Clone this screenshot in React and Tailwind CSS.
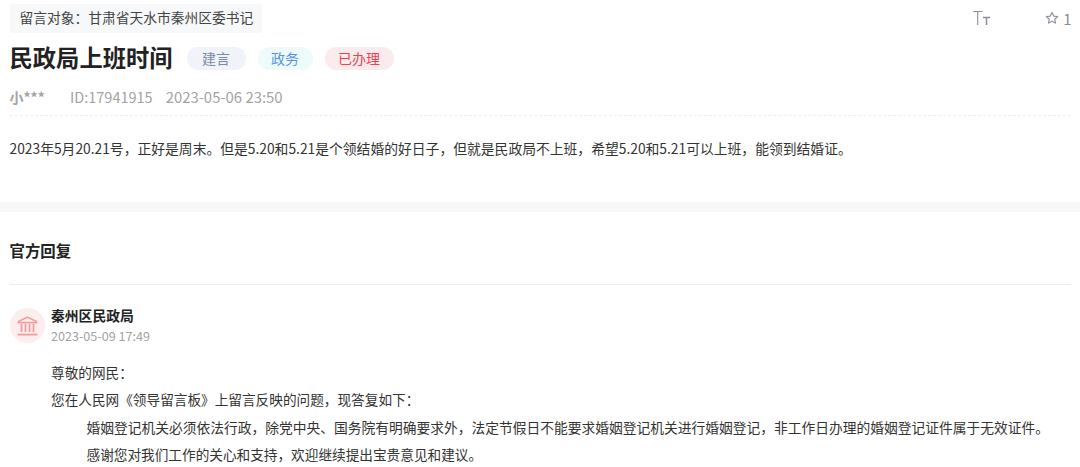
const font = { fontFamily: '"Noto Sans CJK SC", "Liberation Sans", sans-serif' };

function FontSizeIcon() {
  return (
    <svg width="18" height="16" viewBox="0 0 18 16" fill="none" stroke="#8a8f99">
      <path strokeWidth="1.1" d="M0 1.5h9.5M4.7 1.5V15" />
      <path strokeWidth="1.5" d="M10 7.5h7M13.5 7.5V15" />
    </svg>
  );
}

function StarIcon() {
  return (
    <svg width="14" height="14" viewBox="0 0 24 24" fill="none" stroke="#8a8f99" strokeWidth="1.9" strokeLinejoin="round">
      <path d="M12 2.5l2.9 6.2 6.8.8-5 4.6 1.3 6.7-6-3.4-6 3.4 1.3-6.7-5-4.6 6.8-.8z" />
    </svg>
  );
}

function BankIcon() {
  return (
    <svg width="21" height="20" viewBox="0 0 21 20" fill="none" stroke="#f39c9c" strokeWidth="1.6">
      <path d="M10.5 1.2L19.5 5.4V6.6H1.5V5.4z" />
      <path d="M4.5 8v8M8.5 8v8M12.5 8v8M16.5 8v8" strokeWidth="1.8" />
      <path d="M0.5 18.6h20" strokeWidth="1.8" />
    </svg>
  );
}

function Tag({ className, children }) {
  return (
    <span className={`flex h-[23px] items-center justify-center rounded-full text-[14px] ${className}`}>
      {children}
    </span>
  );
}

export default function App() {
  return (
    <div style={font} className="h-[467px] w-[1080px] overflow-hidden bg-white text-[#333]">
      <section className="h-[202px] px-[9.5px] pt-[4px]">
        <div className="flex items-start justify-between">
          <div className="flex h-[29px] items-center bg-[#f7f8fa] pr-[9px] pl-[10px] pb-[2px] text-[13.75px] leading-none text-[#444]">
            留言对象：甘肃省天水市秦州区委书记
          </div>
          <div className="-mr-px flex items-center pt-[6px] text-[15px] leading-none text-[#8a8f99]">
            <FontSizeIcon />
            <span className="ml-[54px] flex items-center gap-[4px]">
              <StarIcon />1
            </span>
          </div>
        </div>

        <div className="mt-[9px] flex h-[33px] items-center">
          <h1 className="pb-[2px] text-[23.3px] leading-none font-bold text-[#222]">民政局上班时间</h1>
          <div className="ml-[14px] flex gap-[12px]">
            <Tag className="w-[59px] bg-[#f0f3f9] text-[#7c8aa5]">建言</Tag>
            <Tag className="w-[55px] bg-[#edfbfb] text-[#5b93e0]">政务</Tag>
            <Tag className="w-[69px] bg-[#fcebec] text-[#ea4350]">已办理</Tag>
          </div>
        </div>

        <div className="mt-[12px] flex h-[20px] items-center leading-none text-[#a3a3a3]">
          <span className="w-[60.5px] text-[14px] font-bold">小***</span>
          <span className="text-[14.5px]">ID:17941915</span>
          <span className="ml-[13px] text-[14.9px]">2023-05-06 23:50</span>
        </div>

        <div className="mt-[8px] border-t border-dashed border-[#eee] pt-[22px] text-[13.8px] leading-[20px] text-[#333]">
          2023年5月20.21号，正好是周末。但是5.20和5.21是个领结婚的好日子，但就是民政局不上班，希望5.20和5.21可以上班，能领到结婚证。
        </div>
      </section>

      <div className="h-[10px] bg-[#f6f7f9]" />

      <section className="px-[9.5px]">
        <h2 className="flex h-[73px] items-center border-b border-[#eee] pt-[6px] text-[15.4px] leading-none font-bold text-[#222]">
          官方回复
        </h2>

        <div className="mt-[21px] flex items-center gap-[6.5px]">
          <div className="flex h-[35px] w-[35px] items-center justify-center rounded-full bg-[#fdeeee]">
            <BankIcon />
          </div>
          <div>
            <div className="text-[13.8px] leading-[19px] font-bold text-[#222]">秦州区民政局</div>
            <div className="mt-[2px] text-[12.6px] leading-[18px] text-[#a3a3a3]">2023-05-09 17:49</div>
          </div>
        </div>

        <div className="mt-[14px] pl-[41.5px] text-[13.65px] leading-[27.3px] text-[#333]">
          <p>尊敬的网民：</p>
          <p>您在人民网《领导留言板》上留言反映的问题，现答复如下：</p>
          <p className="pl-[35.5px] text-[13.75px]">
            婚姻登记机关必须依法行政，除党中央、国务院有明确要求外，法定节假日不能要求婚姻登记机关进行婚姻登记，非工作日办理的婚姻登记证件属于无效证件。
          </p>
          <p className="pl-[35.5px]">感谢您对我们工作的关心和支持，欢迎继续提出宝贵意见和建议。</p>
        </div>
      </section>
    </div>
  );
}
